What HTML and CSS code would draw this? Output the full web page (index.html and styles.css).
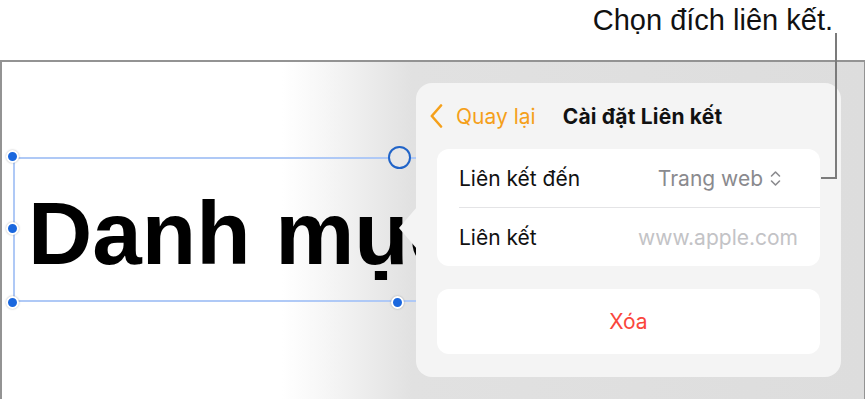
FILE: index.html
```html
<!DOCTYPE html>
<html lang="vi">
<head>
    <meta charset="UTF-8">
    <title>Cài đặt Liên kết</title>
    <link rel="stylesheet" href="styles.css">
</head>
<body>

<!-- ===== CALLOUT ===== -->
<div class="caption">Chọn đích liên kết.</div>
<div class="callout_line"></div>

<!-- ===== SCREEN ===== -->
<div class="screen">
    <div class="selection_box">
        <div class="title_text">Danh mục</div>
        <span class="handle top_left"></span>
        <span class="handle mid_left"></span>
        <span class="handle bottom_left"></span>
        <span class="handle bottom_mid"></span>
        <span class="ring_handle"></span>
    </div>

    <!-- ===== LINK SETTINGS POPOVER ===== -->
    <div class="popover">
        <span class="popover_arrow"></span>

        <div class="popover_header">
            <svg class="back_chevron" width="13" height="24" viewBox="0 0 13 24">
                <path d="M11 1.5 L1.8 12 L11 22.5" fill="none" stroke="#f5a01a" stroke-width="2.6" stroke-linecap="round" stroke-linejoin="round"/>
            </svg>
            <span class="back_label">Quay lại</span>
            <span class="header_title">Cài đặt Liên kết</span>
        </div>

        <div class="settings_group">
            <div class="settings_row first_row">
                <span>Liên kết đến</span>
                <span class="row_value">
                    Trang web
                    <svg class="updown_icon" width="11" height="17" viewBox="0 0 11 17">
                        <path d="M1.5 6 L5.5 2 L9.5 6 M1.5 11 L5.5 15 L9.5 11" fill="none" stroke="#8a8a8e" stroke-width="1.6" stroke-linecap="round" stroke-linejoin="round"/>
                    </svg>
                </span>
            </div>
            <div class="settings_row">
                <span>Liên kết</span>
                <span class="placeholder_value">www.apple.com</span>
            </div>
        </div>

        <div class="delete_button">Xóa</div>
    </div>
</div>

</body>
</html>
```

FILE: styles.css
```css
body {
    margin: 0;
    width: 865px;
    height: 399px;
    background-color: #fff;
    font-family: 'Inter', 'Noto Sans', sans-serif;
    position: relative;
    overflow: hidden;
}

/* ===== Callout ===== */
.caption {
    height: 60px;
    box-sizing: border-box;
    padding: 4px 32px 0 0;
    text-align: right;
    font-family: 'Liberation Sans', sans-serif;
    font-size: 29px;
    line-height: 32px;
    color: #111;
}

.callout_line {
    position: absolute;
    left: 821px;
    top: 33px;
    width: 14px;
    height: 144px;
    border-right: 2px solid #7b7b7b;
    border-bottom: 2px solid #7b7b7b;
    z-index: 5;
}

/* ===== Screen ===== */
.screen {
    position: relative;
    height: 337px;
    border: 2px solid #939393;
    border-right-width: 1px;
    overflow: hidden;
    background: linear-gradient(to right, #fff 0, #fff 280px, #f7f7f7 320px, #ececec 365px, #e1e1e1 410px, #dddddd 100%);
}

.selection_box {
    position: relative;
    margin: 95px 0 0 11px;
    width: 770px;
    height: 145px;
    box-sizing: border-box;
    border: 2px solid #afc9f6;
}

.title_text {
    padding: 30px 0 0 13px;
    font-family: 'Liberation Sans', sans-serif;
    font-weight: bold;
    font-size: 89px;
    line-height: 88px;
    color: #000;
    white-space: nowrap;
}

.handle {
    position: absolute;
    width: 9px;
    height: 9px;
    border-radius: 50%;
    background-color: #1a67de;
    border: 2px solid #fff;
    box-shadow: 0 0 2px rgba(0, 0, 0, 0.3);
}

.top_left { left: -9px; top: -9px; }
.mid_left { left: -9px; top: 63px; }
.bottom_left { left: -9px; bottom: -9px; }
.bottom_mid { left: 376px; bottom: -9px; }

.ring_handle {
    position: absolute;
    left: 373px;
    top: -13px;
    width: 19px;
    height: 19px;
    border-radius: 50%;
    border: 2px solid #2164c8;
    background-color: #e8e8e8;
}

/* ===== Popover ===== */
.popover {
    position: absolute;
    left: 414px;
    top: 21px;
    width: 425px;
    height: 294px;
    border-radius: 16px;
    background-color: #f4f4f4;
}

.popover_arrow {
    position: absolute;
    left: -17px;
    top: 124px;
    width: 18px;
    height: 42px;
    background-color: #f4f4f4;
    clip-path: polygon(0 50%, 100% 0, 100% 100%);
}

.popover_header {
    display: flex;
    align-items: center;
    height: 66px;
    padding-left: 14px;
    font-size: 21px;
}

.back_chevron {
    margin-right: 13px;
}

.back_label {
    color: #f5a01a;
}

.header_title {
    margin-left: 27px;
    font-weight: 700;
    letter-spacing: 0.2px;
    color: #111;
}

.settings_group {
    margin: 0 21px;
    background-color: #fff;
    border-radius: 12px;
}

.settings_row {
    display: flex;
    justify-content: space-between;
    align-items: center;
    height: 58px;
    margin-left: 22px;
    padding-right: 22px;
    font-size: 21px;
    color: #111;
}

.first_row {
    height: 58px;
    border-bottom: 1px solid #e4e4e6;
    padding-right: 39px;
}

.row_value {
    display: flex;
    align-items: center;
    color: #8a8a8e;
}

.updown_icon {
    margin-left: 7px;
}

.placeholder_value {
    color: #c3c3c6;
}

.delete_button {
    margin: 23px 21px 0;
    height: 65px;
    display: flex;
    align-items: center;
    justify-content: center;
    background-color: #fff;
    border-radius: 12px;
    font-size: 21px;
    color: #fa463c;
}
```
